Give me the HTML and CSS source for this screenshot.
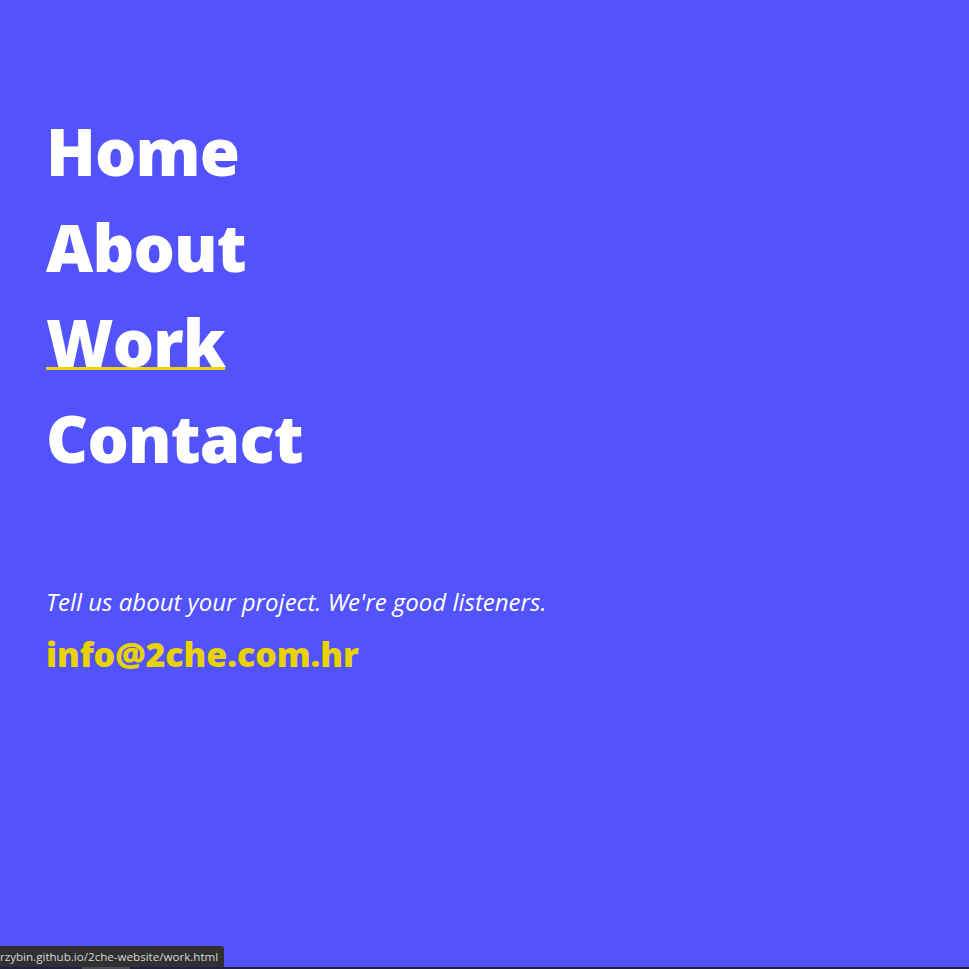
FILE: index.html
```
<!DOCTYPE html>
<html lang="en">
<head>
<meta charset="utf-8">
<title>2che - Work</title>
<link rel="stylesheet" href="styles.css">
</head>
<body>
<main class="menu">
  <nav class="nav">
    <a class="nav-link" href="#">Home</a>
    <a class="nav-link" href="#">About</a>
    <a class="nav-link nav-link--active" href="#">Work</a>
    <a class="nav-link" href="#">Contact</a>
  </nav>
  <section class="contact">
    <p class="tagline">Tell us about your project. We're good listeners.</p>
    <a class="email" href="#">info@2che.com.hr</a>
  </section>
</main>
<div class="status">rzybin.github.io/2che-website/work.html</div>
<div class="bottom-bar"><span class="bottom-thumb"></span></div>
</body>
</html>
```
FILE: styles.css
```
html, body {
  margin: 0;
  padding: 0;
  height: 100%;
}
body {
  background: #5353fd;
  font-family: "Open Sans", "Liberation Sans", sans-serif;
  color: #fff;
  overflow: hidden;
}
.menu {
  padding: 104px 46px 0;
}
.nav {
  display: flex;
  flex-direction: column;
  align-items: flex-start;
}
.nav-link {
  color: #fff;
  text-decoration: none;
  font-weight: 800;
  font-size: 65px;
  letter-spacing: -0.8px;
  line-height: 95.5px;
}
.nav-link--active {
  text-decoration: underline;
  text-decoration-color: #ecd400;
  text-decoration-thickness: 3px;
  text-underline-offset: 0px;
  text-decoration-skip-ink: none;
}
.contact {
  margin-top: 99px;
}
.tagline {
  margin: 0;
  font-style: italic;
  font-size: 24px;
  line-height: 34px;
}
.email {
  display: inline-block;
  margin-top: 12px;
  color: #e8d200;
  text-decoration: none;
  font-weight: 800;
  font-size: 34px;
  letter-spacing: -0.1px;
}
.status {
  position: fixed;
  left: 0;
  bottom: 2px;
  background: #303030;
  color: #d6d6d6;
  font-family: "Open Sans", sans-serif;
  font-size: 11.6px;
  line-height: 21px;
  padding: 0 6px 0 0;
  border-top-right-radius: 3px;
  white-space: nowrap;
}
.bottom-bar {
  position: fixed;
  left: 0;
  right: 0;
  bottom: 0;
  height: 2px;
  background: #202040;
}
.bottom-thumb {
  display: block;
  margin-left: 82px;
  width: 48px;
  height: 2px;
  background: #4a4a5a;
}
```
